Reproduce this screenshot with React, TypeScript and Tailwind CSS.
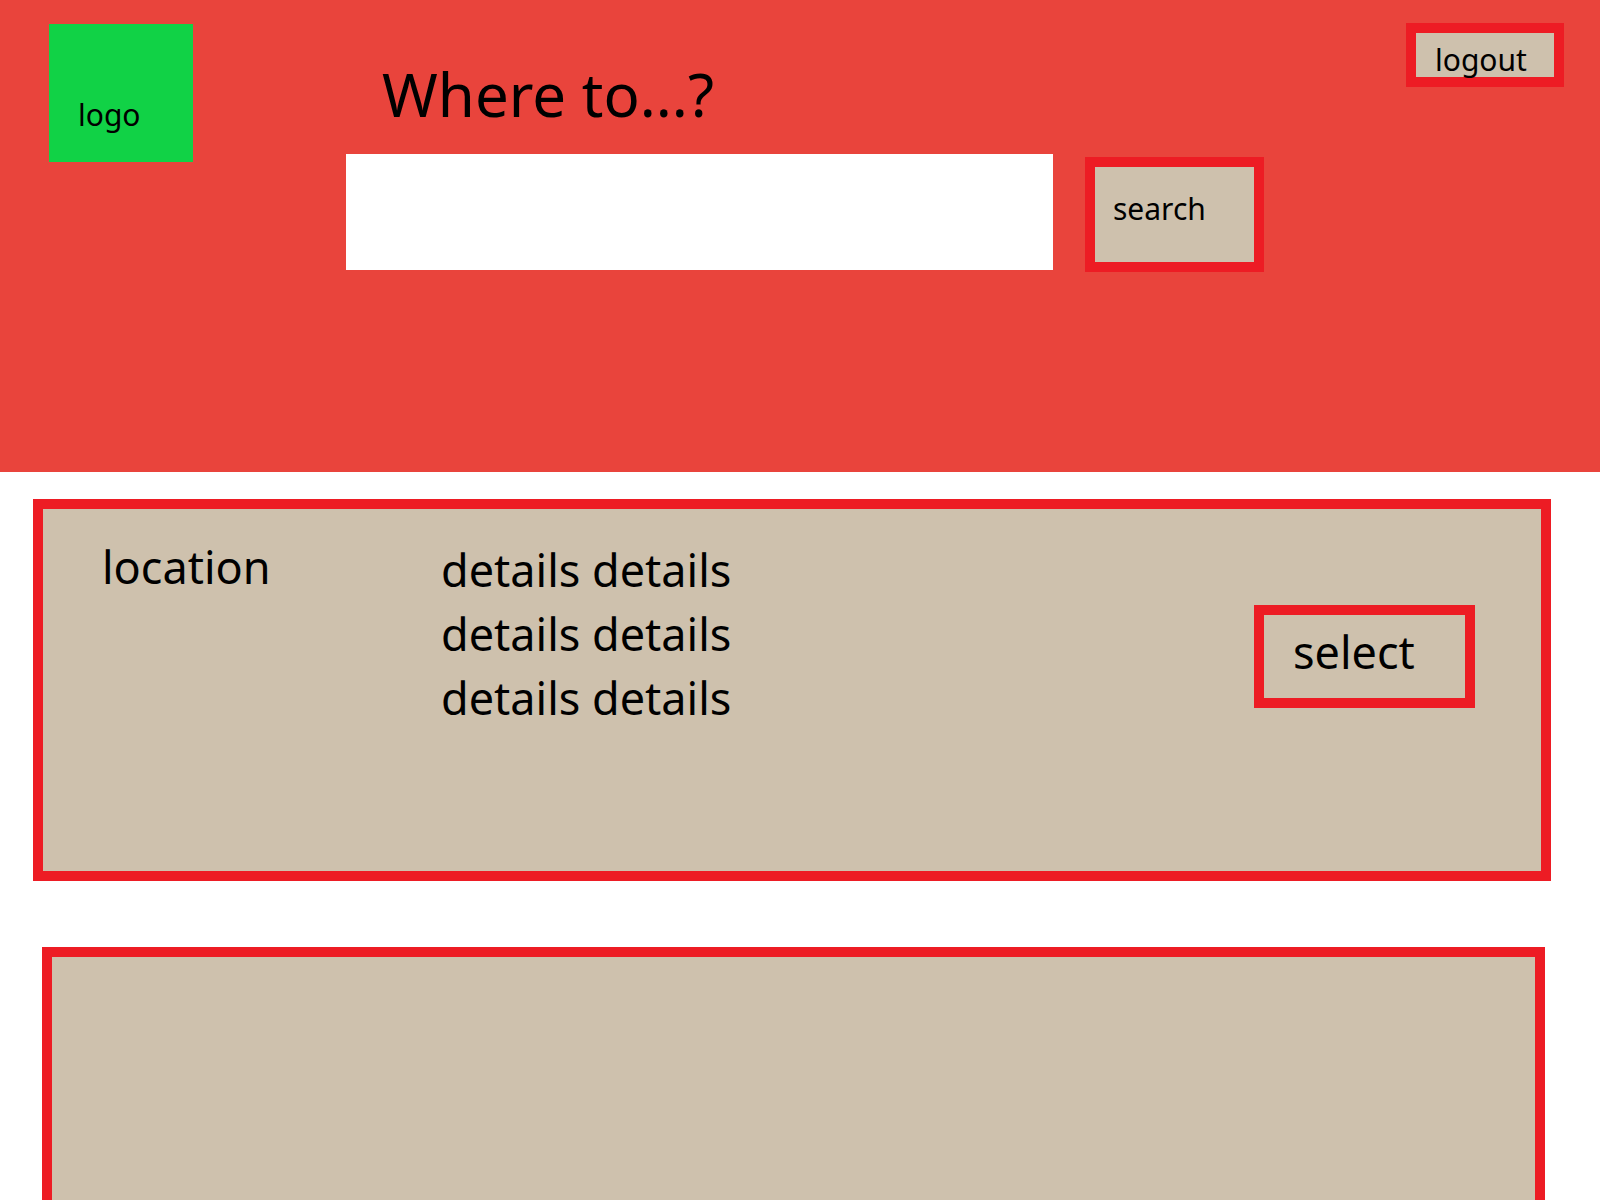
const details = ["details details", "details details", "details details"];

function Header() {
  return (
    <header className="flex h-[472px] items-start bg-[#e9443c] pl-[49px] pr-9">
      <div className="mt-6 h-[138px] w-36 shrink-0 bg-[#11d246] pl-[29px] pt-[75px] text-[30px] leading-8">
        logo
      </div>
      <form
        className="ml-[153px] min-w-0 flex-1 pt-[54px]"
        onSubmit={(e) => e.preventDefault()}
      >
        <label htmlFor="destination" className="block pl-9 text-[60px] leading-20">
          Where to...?
        </label>
        <div className="mt-5 flex items-end gap-8">
          <input
            id="destination"
            type="text"
            className="h-[116px] min-w-0 flex-1 bg-white px-7 text-[45px] outline-none"
          />
          <button
            type="submit"
            className="-mb-0.5 flex h-[115px] w-[179px] shrink-0 items-start border-10 border-[#ed1c24] bg-[#cec1ad] pl-[18px] pt-[26px] text-[30px] leading-8"
          >
            search
          </button>
        </div>
      </form>
      <button
        type="button"
        className="ml-[142px] mt-[23px] flex h-16 w-[158px] shrink-0 items-start border-10 border-[#ed1c24] bg-[#cec1ad] pl-[19px] pt-[11px] text-[30px] leading-8"
      >
        logout
      </button>
    </header>
  );
}

export default function App() {
  return (
    <div className="flex min-h-screen flex-col bg-white font-['Noto_Sans','Open_Sans',sans-serif] text-black">
      <Header />
      <main className="flex flex-1 flex-col pt-[27px]">
        <article className="ml-[33px] mr-[49px] flex min-h-[382px] items-start border-10 border-[#ed1c24] bg-[#cec1ad] pl-[59px] pr-[66px] text-[45px] leading-16">
          <h2 className="w-[339px] shrink-0 pt-[26px]">location</h2>
          <div className="flex-1 pt-[29px]">
            {details.map((line, i) => (
              <p key={i}>{line}</p>
            ))}
          </div>
          <button
            type="button"
            className="mt-24 flex h-[103px] w-[221px] shrink-0 items-start border-10 border-[#ed1c24] pl-[29px] pt-[5px]"
          >
            select
          </button>
        </article>
        <article className="ml-[42px] mr-[55px] mt-[66px] flex-1 border-10 border-b-0 border-[#ed1c24] bg-[#cec1ad]" />
      </main>
    </div>
  );
}
